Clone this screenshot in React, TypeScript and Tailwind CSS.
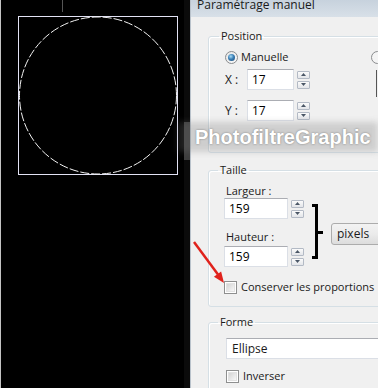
import React from "react";

function Spinner() {
  return (
    <div className="flex flex-col gap-[2px] w-[13px] shrink-0">
      <div className="h-[8px] border border-[#b3bac5] rounded-[1px] bg-gradient-to-b from-[#fbfbfb] to-[#e3e5e9] flex items-center justify-center">
        <svg width="5" height="3" viewBox="0 0 5 3">
          <path d="M0 3 L2.5 0 L5 3Z" fill="#4a5666" />
        </svg>
      </div>
      <div className="h-[8px] border border-[#b3bac5] rounded-[1px] bg-gradient-to-b from-[#fbfbfb] to-[#e3e5e9] flex items-center justify-center">
        <svg width="5" height="3" viewBox="0 0 5 3">
          <path d="M0 0 L2.5 3 L5 0Z" fill="#4a5666" />
        </svg>
      </div>
    </div>
  );
}

function SpinEdit({ value, w }: { value: string; w: string }) {
  return (
    <div className="flex items-center h-[21px]">
      <div
        className={`${w} h-[21px] bg-white border border-[#dbdfe6] border-t-[#abadb3] flex items-center pl-[4px] text-[12px] text-black`}
      >
        {value}
      </div>
      <div className="ml-[3px]">
        <Spinner />
      </div>
    </div>
  );
}

function Checkbox() {
  return (
    <div className="w-[13px] h-[13px] border border-[#8e8f8f] bg-white p-px shrink-0">
      <div className="w-full h-full bg-gradient-to-br from-[#d4d4d4] to-[#f7f7f7] border border-[#e2e2e2]" />
    </div>
  );
}

export default function App() {
  return (
    <div className="relative w-[378px] h-[388px] overflow-hidden flex bg-black font-['Open_Sans','Noto_Sans',sans-serif] text-[11px] leading-[14px] text-[#1a1a1a]">
      {/* canvas */}
      <div className="w-[190px] h-full bg-black flex shrink-0">
        <div className="w-px h-full bg-[#c4c4c4]" />
        <div className="flex-1">
          <svg width="183" height="388" viewBox="0 0 183 388">
            <line x1="61.5" y1="0" x2="61.5" y2="12" stroke="#555" strokeWidth="1" />
            <rect x="17.5" y="16.5" width="159" height="158" fill="none" stroke="#e2e2f4" strokeWidth="1" />
            <circle cx="97" cy="95.5" r="78.5" fill="none" stroke="#f4f4f4" strokeWidth="1" strokeDasharray="9 2" />
          </svg>
        </div>
        <div className="w-[6px] h-full bg-[#0b0b0b] flex flex-col">
          <div className="mt-[122px] h-[38px] bg-[#3e3e3e]" />
        </div>
      </div>

      {/* dialog */}
      <div className="w-[188px] h-full shrink-0 flex flex-col bg-[#f0f0f0] border-l border-[#b9c2cb]">
        <div className="h-[17px] shrink-0 overflow-hidden bg-gradient-to-b from-[#c7d2dd] to-[#d8e0e8] pl-[6px]">
          <div className="-mt-[2px] text-[12px] leading-[14px] text-[#1a1a1a] whitespace-nowrap">
            Paramétrage manuel
          </div>
        </div>
        <div className="flex-1 min-h-0 overflow-hidden pl-[17px] pt-[12px]">
          {/* Position */}
          <fieldset className="w-[200px] border border-[#d5dfe5] rounded-[3px] shadow-[inset_1px_1px_0_#ffffff] p-0 m-0">
            <legend className="ml-[10px] px-[2px] text-[11px] leading-[14px]">Position</legend>
            <div className="pl-[16px] pb-[31px]">
              <div className="mt-[7px] h-[14px] flex items-center">
                <div className="w-[13px] h-[13px] rounded-full border border-[#8a8c8e] bg-gradient-to-br from-[#e6e6e6] to-[#fafafa] flex items-center justify-center shrink-0">
                  <div className="w-[7px] h-[7px] rounded-full bg-[radial-gradient(circle_at_40%_35%,#a9dcf5_0%,#3a7fb6_45%,#1b4670_100%)]" />
                </div>
                <span className="ml-[3px]">Manuelle</span>
                <div className="ml-[83px] w-[13px] h-[13px] rounded-full border border-[#8a8c8e] bg-[#f4f4f4] shrink-0" />
              </div>
              <div className="mt-[5px] h-[21px] flex items-center">
                <span className="w-[22px] text-[12px]">X :</span>
                <SpinEdit value="17" w="w-[47px]" />
                <div className="ml-[66px] w-[10px] h-[27px] border-l border-[#555] self-start mt-[1px] -mb-[7px]" />
              </div>
              <div className="mt-[10px] h-[21px] flex items-center">
                <span className="w-[22px] text-[12px]">Y :</span>
                <SpinEdit value="17" w="w-[47px]" />
              </div>
            </div>
          </fieldset>

          {/* Taille */}
          <fieldset className="mt-[10px] w-[200px] border border-[#d5dfe5] rounded-[3px] shadow-[inset_1px_1px_0_#ffffff] p-0 m-0">
            <legend className="ml-[9px] px-[2px] text-[11px] leading-[14px]">Taille</legend>
            <div className="pl-[15px] pb-[12px]">
              <div className="flex items-start">
                <div className="flex flex-col">
                  <span className="mt-[7px] pl-[2px] text-[11px]">Largeur :</span>
                  <SpinEdit value="159" w="w-[64px]" />
                  <span className="mt-[11px] pl-[2px] text-[11px]">Hauteur :</span>
                  <div className="mt-[2px]">
                    <SpinEdit value="159" w="w-[64px]" />
                  </div>
                </div>
                <svg className="ml-[8px] mt-[27px] shrink-0" width="12" height="56" viewBox="0 0 12 56">
                  <path d="M0 1.5 H4.5 V53.5 H0" fill="none" stroke="#000" strokeWidth="3" />
                  <path d="M4.5 28.5 H11" fill="none" stroke="#000" strokeWidth="3" />
                </svg>
                <div className="ml-[7px] mt-[46px] w-[70px] h-[22px] rounded-l-[3px] border border-[#acacac] bg-gradient-to-b from-[#f3f3f3] via-[#ebebeb] to-[#dcdcdc] flex items-center pl-[5px] text-[12px] shrink-0">
                  pixels
                </div>
              </div>
              <div className="mt-[13px] h-[14px] flex items-center">
                <Checkbox />
                <span className="ml-[4px] whitespace-nowrap text-[11px]">Conserver les proportions</span>
              </div>
            </div>
          </fieldset>

          {/* Forme */}
          <fieldset className="mt-[8px] w-[200px] h-[100px] border border-[#d5dfe5] rounded-[3px] shadow-[inset_1px_1px_0_#ffffff] p-0 m-0">
            <legend className="ml-[9px] px-[2px] text-[11px] leading-[14px]">Forme</legend>
            <div className="pl-[17px]">
              <div className="mt-[9px] w-[180px] h-[21px] bg-white border border-[#dbdfe6] border-t-[#abadb3] flex items-center pl-[5px] text-[12px]">
                Ellipse
              </div>
              <div className="mt-[10px] h-[14px] flex items-center">
                <Checkbox />
                <span className="ml-[4px] text-[11px]">Inverser</span>
              </div>
            </div>
          </fieldset>
        </div>
      </div>

      {/* watermark overlay */}
      <div className="absolute left-[176px] top-[120px] w-[204px] h-[34px]">
        <div className="absolute inset-[2px] bg-[rgba(120,120,120,0.28)] blur-[3px]" />
        <div className="relative h-full flex items-center pl-[19px] font-['Liberation_Sans',Arial,sans-serif] font-bold text-[20px] leading-[20px] text-white [text-shadow:0_0_2px_rgba(60,60,60,0.6)] whitespace-nowrap">
          PhotofiltreGraphic
        </div>
      </div>

      {/* red arrow */}
      <svg className="absolute left-[190px] top-[238px]" width="40" height="50" viewBox="0 0 40 50">
        <line x1="4" y1="4" x2="28" y2="36.5" stroke="#e0221c" strokeWidth="2.5" />
        <polygon points="34,45 23.9,38.8 31.1,33.4" fill="#e0221c" />
      </svg>
    </div>
  );
}
